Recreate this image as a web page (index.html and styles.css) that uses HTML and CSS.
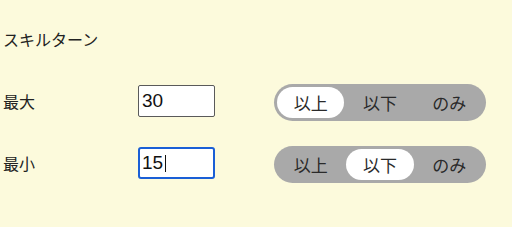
FILE: index.html
```html
<!DOCTYPE html>
<html lang="ja">
<head>
<meta charset="utf-8">
<link rel="stylesheet" href="styles.css">
</head>
<body>
<div class="page">
  <div class="title">スキルターン</div>
  <div class="row">
    <div class="label">最大</div>
    <input class="num" type="text" value="30">
    <div class="toggle">
      <span class="opt selected">以上</span>
      <span class="opt">以下</span>
      <span class="opt">のみ</span>
    </div>
  </div>
  <div class="row">
    <div class="label">最小</div>
    <div class="field">
      <input class="num focused" type="text" value="15">
      <span class="caret"></span>
    </div>
    <div class="toggle">
      <span class="opt">以上</span>
      <span class="opt selected">以下</span>
      <span class="opt">のみ</span>
    </div>
  </div>
</div>
</body>
</html>
```
FILE: styles.css
```css
html, body {
  margin: 0;
  padding: 0;
  background: #fcfadc;
}
body {
  width: 512px;
  height: 227px;
  overflow: hidden;
  font-family: "Noto Sans CJK JP", "Noto Sans", sans-serif;
  color: #222;
}
.page {
  padding: 27px 0 0 3px;
}
.title {
  font-size: 16px;
  line-height: 24px;
  height: 24px;
}
.row {
  display: grid;
  grid-template-columns: 135px 77px 212px;
  column-gap: 0;
  align-items: start;
  margin-top: 33px;
}
.row + .row {
  margin-top: 25px;
}
.row > .toggle {
  margin-left: 59px;
}
.label {
  font-size: 16px;
  line-height: 32px;
  margin-top: 1px;
}
.field {
  position: relative;
  margin-top: 1px;
  width: 77px;
  height: 32px;
}
.num {
  box-sizing: border-box;
  width: 77px;
  height: 32px;
  margin: 1px 0 0 0;
  padding: 0 0 0 3px;
  border: 1px solid #5a5a5a;
  border-radius: 2px;
  background: #fff;
  font-family: "Liberation Sans", Arial, sans-serif;
  font-size: 19px;
  color: #111;
  outline: none;
}
.field .num {
  margin: 0;
}
.num.focused {
  border: 2px solid #1a5fd6;
  border-radius: 3px;
  padding-left: 2px;
}
.caret {
  position: absolute;
  left: 27px;
  top: 8px;
  width: 1px;
  height: 17px;
  background: #111;
}
.toggle {
  box-sizing: border-box;
  width: 212px;
  height: 37px;
  padding: 3px;
  border-radius: 19px;
  background: #a9a9a9;
  display: grid;
  grid-template-columns: 1fr 1fr 1fr;
  column-gap: 2px;
}
.opt {
  display: flex;
  align-items: center;
  justify-content: center;
  border-radius: 16px;
  font-size: 17px;
  color: #2a2a2a;
}
.opt.selected {
  background: #fff;
}
```
